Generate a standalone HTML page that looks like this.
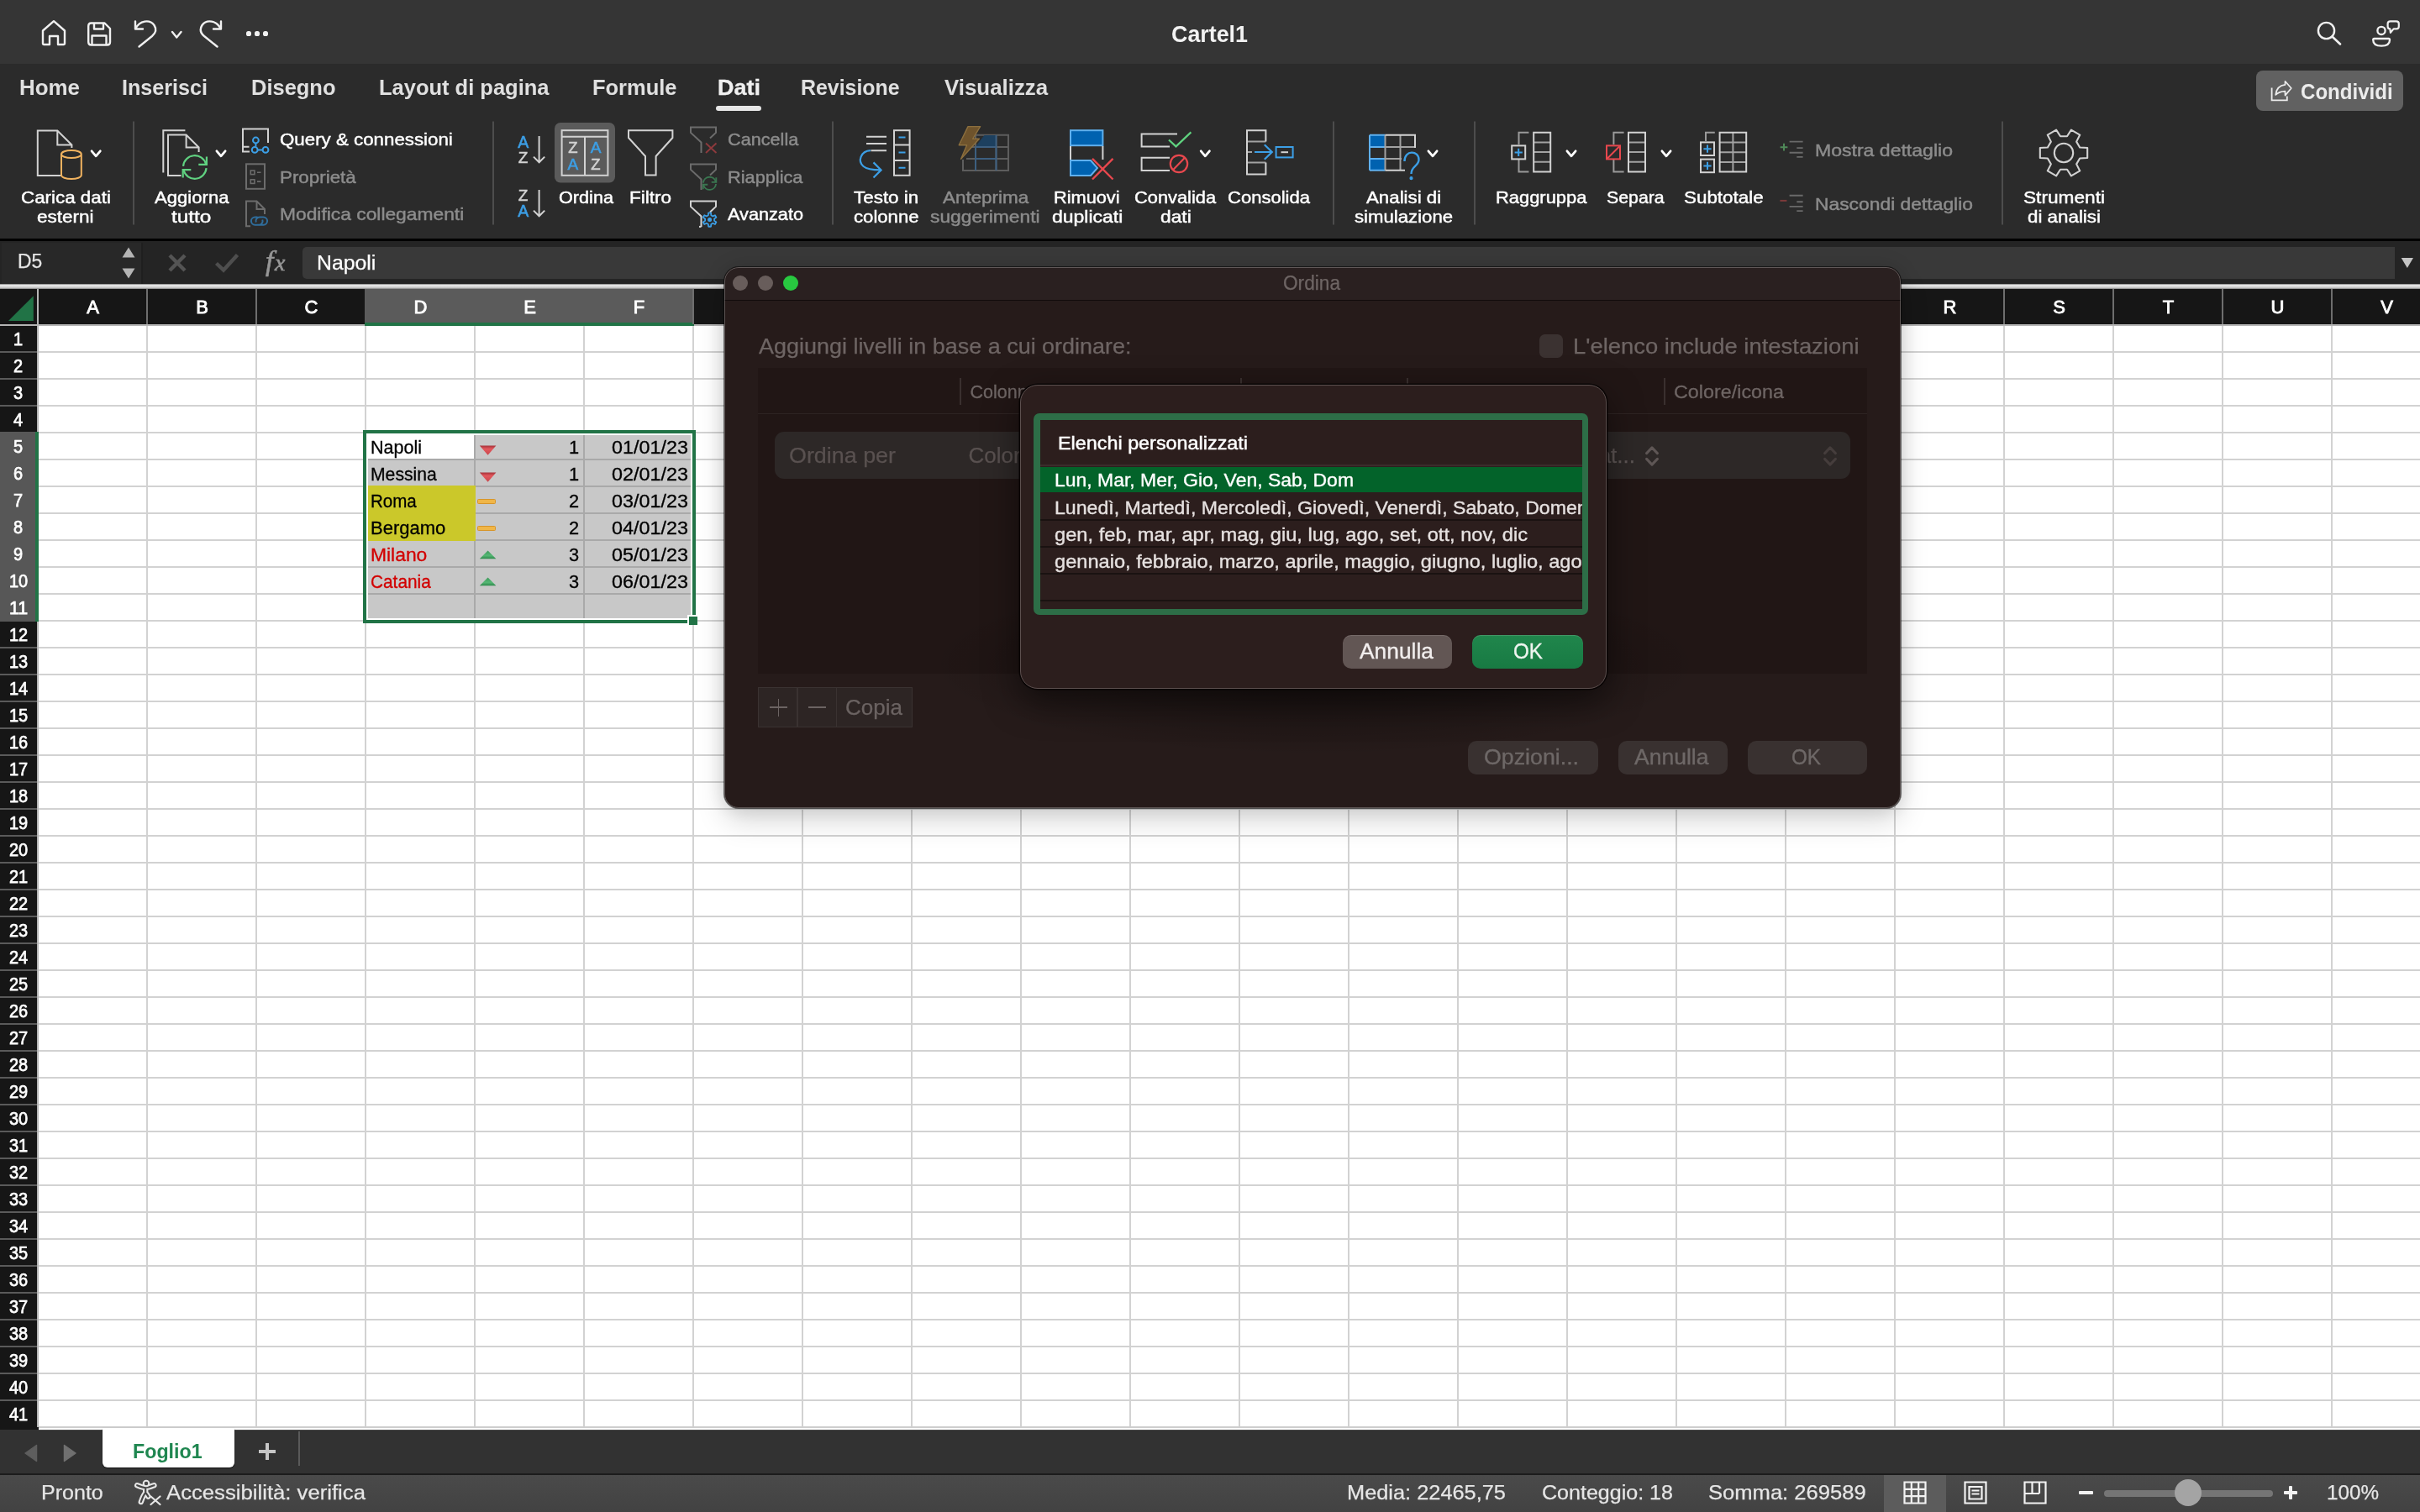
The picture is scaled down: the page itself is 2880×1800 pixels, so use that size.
<!DOCTYPE html><html lang="it"><head><meta charset="utf-8"><title>Cartel1</title><style>
*{margin:0;padding:0;box-sizing:border-box}
html,body{width:2880px;height:1800px;overflow:hidden;background:#fff}
body{position:relative;font-family:"Liberation Sans",sans-serif}
div,span,svg{position:absolute}
#root{left:0;top:0;width:2880px;height:1800px;overflow:hidden;will-change:transform}
.t{white-space:nowrap;transform-origin:0 50%;display:block}
svg{overflow:visible}
</style></head><body><div id="root">
<div style="left:0px;top:0px;width:2880px;height:76px;background:#353535;"></div>
<span class="t" style="left:1394.00px;top:27.64px;font-size:27px;line-height:27px;color:#f2f2f2;font-weight:700;transform:scaleX(0.9940);">Cartel1</span>
<div style="left:0px;top:76px;width:2880px;height:208px;background:#2b2b2b;"></div>
<div style="left:0px;top:283.8px;width:2880px;height:2.8px;background:#000;"></div>
<svg style="left:48px;top:22px" width="32" height="34"><path d="M3 14.5 L16 3.2 L29 14.5 V29.5 Q29 31 27.5 31 H21 V21 H11 V31 H4.5 Q3 31 3 29.5 Z" fill="none" stroke="#f0f0f0" stroke-width="2.4" stroke-linejoin="round"/></svg>
<svg style="left:103px;top:25px" width="31" height="31"><path d="M5.5 2.5 H21.5 L28 9 V25 Q28 28.5 24.5 28.5 H5.5 Q2.2 28.5 2.2 25 V6 Q2.2 2.5 5.5 2.5 Z M9 2.5 V9.5 H20 V2.5 M6.5 28 V17.5 H23.5 V28" fill="none" stroke="#f0f0f0" stroke-width="2.4" stroke-linejoin="round"/></svg>
<svg style="left:158px;top:22px" width="30" height="36"><path d="M3 3.5 V12.5 H12 M3.5 12 C8 2.5 20 0.5 25.5 8 C29 13.5 26.5 18 23 21 L7.5 33.5" fill="none" stroke="#f0f0f0" stroke-width="2.4" stroke-linecap="round" stroke-linejoin="round"/></svg>
<svg style="left:202.75px;top:35.55px" width="14.5" height="10.5"><path d="M2 2 L7.25 8.5 L12.5 2" fill="none" stroke="#f0f0f0" stroke-width="2.4" stroke-linecap="round" stroke-linejoin="round"/></svg>
<svg style="left:236px;top:22px" width="30" height="36"><path d="M27 3.5 V12.5 H18 M26.5 12 C22 2.5 10 0.5 4.5 8 C1 13.5 3.5 18 7 21 L22.5 33.5" fill="none" stroke="#f0f0f0" stroke-width="2.4" stroke-linecap="round" stroke-linejoin="round"/></svg>
<div style="left:293.4px;top:37.4px;width:5.2px;height:5.2px;background:#f0f0f0;border-radius:50%"></div>
<div style="left:303.4px;top:37.4px;width:5.2px;height:5.2px;background:#f0f0f0;border-radius:50%"></div>
<div style="left:313.4px;top:37.4px;width:5.2px;height:5.2px;background:#f0f0f0;border-radius:50%"></div>
<svg style="left:2756.4px;top:24.2px" width="32" height="32"><circle cx="12.5" cy="12.5" r="9.6" fill="none" stroke="#f0f0f0" stroke-width="2.4"/><path d="M19.5 19.5 L29 28.5" fill="none" stroke="#f0f0f0" stroke-width="2.6" stroke-linecap="round"/></svg>
<svg style="left:2822px;top:23px" width="36" height="36"><circle cx="12" cy="13.4" r="4.6" fill="none" stroke="#f0f0f0" stroke-width="2.3"/><path d="M3.5 23 H20.7 Q22 23 22 24.4 C22 29.2 18 31.6 12.1 31.6 C6.2 31.6 2.2 29.2 2.2 24.4 Q2.2 23 3.5 23 Z" fill="none" stroke="#f0f0f0" stroke-width="2.3" stroke-linejoin="round"/><path d="M22.6 2.3 H29.8 Q32.8 2.3 32.8 5.3 V8.4 Q32.8 11.4 29.8 11.4 H26.6 L22.9 15.8 L22.3 11.4 Q19.6 11.2 19.6 8.4 V5.3 Q19.6 2.3 22.6 2.3 Z" fill="none" stroke="#f0f0f0" stroke-width="2.2" stroke-linejoin="round"/></svg>
<span class="t" style="left:23.00px;top:91.76px;font-size:25.8px;line-height:25.8px;color:#e0e0e0;font-weight:700;transform:scaleX(1.0044);">Home</span>
<span class="t" style="left:144.60px;top:91.76px;font-size:25.8px;line-height:25.8px;color:#e0e0e0;font-weight:700;transform:scaleX(0.9742);">Inserisci</span>
<span class="t" style="left:298.50px;top:91.76px;font-size:25.8px;line-height:25.8px;color:#e0e0e0;font-weight:700;transform:scaleX(0.9874);">Disegno</span>
<span class="t" style="left:450.50px;top:91.76px;font-size:25.8px;line-height:25.8px;color:#e0e0e0;font-weight:700;transform:scaleX(0.9879);">Layout di pagina</span>
<span class="t" style="left:704.50px;top:91.76px;font-size:25.8px;line-height:25.8px;color:#e0e0e0;font-weight:700;transform:scaleX(0.9875);">Formule</span>
<span class="t" style="left:953.00px;top:91.76px;font-size:25.8px;line-height:25.8px;color:#e0e0e0;font-weight:700;transform:scaleX(0.9648);">Revisione</span>
<span class="t" style="left:1123.50px;top:91.76px;font-size:25.8px;line-height:25.8px;color:#e0e0e0;font-weight:700;transform:scaleX(1.0028);">Visualizza</span>
<span class="t" style="left:853.50px;top:91.76px;font-size:25.8px;line-height:25.8px;color:#f0f0f0;font-weight:700;transform:scaleX(1.0463);-webkit-text-stroke:0.3px #f0f0f0;">Dati</span>
<div style="left:852px;top:125.8px;width:54px;height:6px;background:#e6e6e6;border-radius:3px"></div>
<div style="left:2685px;top:84px;width:175px;height:48px;background:#616161;border-radius:8px"></div>
<span class="t" style="left:2737.50px;top:96.87px;font-size:25.2px;line-height:25.2px;color:#ececec;font-weight:700;transform:scaleX(0.9556);">Condividi</span>
<svg style="left:2700px;top:95px" width="30" height="28"><path d="M3.6 9.5 V24.4 H21.8 V19.5" fill="none" stroke="#ececec" stroke-width="1.8" /><path d="M19.5 1.8 L26.8 10 L19.5 18.6 V13.6 C14.5 13.8 11 15 8.2 17.9 C9 11 12.5 6.6 19.5 5.9 Z" fill="none" stroke="#ececec" stroke-width="1.7" stroke-linejoin="round"/></svg>
<svg style="left:0;top:0" width="2880" height="290" font-family="Liberation Sans,sans-serif"><rect x="158" y="144.5" width="2" height="123" fill="#4d4d4d" stroke="none" stroke-width="0" /><rect x="586" y="144.5" width="2" height="123" fill="#4d4d4d" stroke="none" stroke-width="0" /><rect x="990" y="144.5" width="2" height="123" fill="#4d4d4d" stroke="none" stroke-width="0" /><rect x="1586" y="144.5" width="2" height="123" fill="#4d4d4d" stroke="none" stroke-width="0" /><rect x="1754" y="144.5" width="2" height="123" fill="#4d4d4d" stroke="none" stroke-width="0" /><rect x="2382" y="144.5" width="2" height="123" fill="#4d4d4d" stroke="none" stroke-width="0" /><path d="M72 208.9 H44.8 V155.5 H68.3 L85.4 172.5 V176 M68.3 155.5 V172.5 H85.4" fill="none" stroke="#d2d2d2" stroke-width="2" stroke-linejoin="miter"/><path d="M73 183.5 V208.5 A11.9 4.6 0 0 0 96.8 208.5 V183.5 A11.9 4.6 0 0 0 73 183.5 A11.9 4.6 0 0 0 96.8 183.5" fill="none" stroke="#f0b25f" stroke-width="2" /><path d="M109.10000000000001 179.8 L114.2 185.8 L119.3 179.8" fill="none" stroke="#fff" stroke-width="2.8" stroke-linecap="round" stroke-linejoin="round"/><path d="M220.4 155.2 H194.3 V205.5" fill="none" stroke="#d2d2d2" stroke-width="2" /><path d="M215.5 208.9 H200 V160.6 H221.6 L236.6 175.5 V181 M221.6 160.6 V175.5 H236.6" fill="none" stroke="#d2d2d2" stroke-width="2" /><path d="M218.05 197.80 A13.8 13.8 0 0 1 245.13 195.43" fill="none" stroke="#60d281" stroke-width="2.2" /><path d="M236.29 195.93 H245.91 V186.59" fill="none" stroke="#60d281" stroke-width="2.2" /><path d="M245.55 200.20 A13.8 13.8 0 0 1 218.47 202.57" fill="none" stroke="#60d281" stroke-width="2.2" /><path d="M227.31 202.07 H217.69 V211.41" fill="none" stroke="#60d281" stroke-width="2.2" /><path d="M257.9 179.8 L263 185.8 L268.1 179.8" fill="none" stroke="#fff" stroke-width="2.8" stroke-linecap="round" stroke-linejoin="round"/><path d="M296.5 174.8 H289 V153.4 H319 V170 M289 174.8 V180.6 H297" fill="none" stroke="#d2d2d2" stroke-width="2" /><path d="M304.4 171 V174.6 M307 178.4 H312" fill="none" stroke="#3c9fe6" stroke-width="2" /><circle cx="304.4" cy="167" r="3.4" fill="none" stroke="#3c9fe6" stroke-width="2"/><circle cx="303.2" cy="178.4" r="3.4" fill="none" stroke="#3c9fe6" stroke-width="2"/><circle cx="316" cy="178.4" r="3.4" fill="none" stroke="#3c9fe6" stroke-width="2"/><rect x="293" y="195.3" width="22" height="29.5" fill="none" stroke="#6c6c6c" stroke-width="2" /><rect x="298.3" y="203" width="4.6" height="4.6" fill="none" stroke="#6c6c6c" stroke-width="1.6" /><rect x="298.3" y="213.8" width="4.6" height="4.6" fill="none" stroke="#6c6c6c" stroke-width="1.6" /><path d="M306 205.3 H310.5 M306 216.1 H310.5" fill="none" stroke="#6c6c6c" stroke-width="1.6" /><path d="M298 269.2 H293 V239.6 H305.5 L315 249 V255 M305.5 239.6 V249 H315" fill="none" stroke="#6c6c6c" stroke-width="2" /><path d="M306.5 258.5 H303.5 A4.6 4.6 0 0 0 303.5 267.7 H308 A4.6 4.6 0 0 0 312.3 261.5 M309.5 267.7 H313.5 A4.6 4.6 0 0 0 313.5 258.5 H309 A4.6 4.6 0 0 0 304.7 264.7" fill="none" stroke="#2f6d9c" stroke-width="2" /><text x="622.8" y="176" font-size="19.5" fill="#3c9fe6" stroke="#3c9fe6" stroke-width="0.55" text-anchor="middle">A</text><text x="622.6" y="194" font-size="19" fill="#d2d2d2" stroke="#d2d2d2" stroke-width="0.55" text-anchor="middle">Z</text><path d="M641.6 162 V193 M635 186.6 L641.6 193.3 L648.2 186.6" fill="none" stroke="#d2d2d2" stroke-width="2" /><text x="622.6" y="239.2" font-size="19" fill="#d2d2d2" stroke="#d2d2d2" stroke-width="0.55" text-anchor="middle">Z</text><text x="622.8" y="257.6" font-size="19.5" fill="#3c9fe6" stroke="#3c9fe6" stroke-width="0.55" text-anchor="middle">A</text><path d="M641.6 226 V257 M635 250.6 L641.6 257.3 L648.2 250.6" fill="none" stroke="#d2d2d2" stroke-width="2" /><rect x="660" y="146" width="72" height="71.6" rx="7" fill="#5b5b5b"/><rect x="668.6" y="155.2" width="54.8" height="53.6" fill="none" stroke="#d2d2d2" stroke-width="2" /><path d="M668.6 162.8 H723.4 M696 162.8 V208.8" fill="none" stroke="#d2d2d2" stroke-width="2" /><text x="681.8" y="182.2" font-size="18.5" fill="#d2d2d2" stroke="#d2d2d2" stroke-width="0.55" text-anchor="middle">Z</text><text x="709" y="182.2" font-size="19" fill="#3c9fe6" stroke="#3c9fe6" stroke-width="0.55" text-anchor="middle">A</text><text x="681.8" y="202.4" font-size="19" fill="#3c9fe6" stroke="#3c9fe6" stroke-width="0.55" text-anchor="middle">A</text><text x="709" y="202.4" font-size="18.5" fill="#d2d2d2" stroke="#d2d2d2" stroke-width="0.55" text-anchor="middle">Z</text><path d="M748 155.3 H800.4 V164 L780.6 186 V208.6 H768 V186 L748 164 Z" fill="none" stroke="#d2d2d2" stroke-width="2" /><path d="M834.5 181.9 V169.4 L822 157.9 V151.4 H852 V157.9 L845 164.4" fill="none" stroke="#6c6c6c" stroke-width="2" /><path d="M840 170.5 L852.5 182 M852.5 170.5 L840 182" fill="none" stroke="#8e3a3d" stroke-width="1.9" /><path d="M834.5 225.9 V213.4 L822 201.9 V195.4 H852 V201.9 L845 208.4" fill="none" stroke="#6c6c6c" stroke-width="2" /><path d="M836.93 217.64 A7.6 7.6 0 0 1 851.84 216.33" fill="none" stroke="#3a7650" stroke-width="1.9" /><path d="M846.74 216.83 H852.29 V211.23" fill="none" stroke="#3a7650" stroke-width="1.9" /><path d="M852.07 218.96 A7.6 7.6 0 0 1 837.16 220.27" fill="none" stroke="#3a7650" stroke-width="1.9" /><path d="M842.26 219.77 H836.71 V225.37" fill="none" stroke="#3a7650" stroke-width="1.9" /><path d="M834.5 269.9 V257.4 L822 245.9 V239.4 H852 V245.9 L845 252.4" fill="none" stroke="#d2d2d2" stroke-width="2" /><path d="M834.5 269.9 H832" fill="none" stroke="#d2d2d2" stroke-width="2" /><path d="M842.87 256.27 L843.13 253.43 L846.07 253.43 L846.33 256.27 L848.35 257.44 L850.94 256.24 L852.41 258.79 L850.08 260.44 L850.08 262.76 L852.41 264.41 L850.94 266.96 L848.35 265.76 L846.33 266.93 L846.07 269.77 L843.13 269.77 L842.87 266.93 L840.85 265.76 L838.26 266.96 L836.79 264.41 L839.12 262.76 L839.12 260.44 L836.79 258.79 L838.26 256.24 L840.85 257.44 Z" fill="none" stroke="#3c9fe6" stroke-width="1.8" stroke-linejoin="round"/><circle cx="844.6" cy="261.6" r="1.6" fill="none" stroke="#3c9fe6" stroke-width="1.8"/><circle cx="844.6" cy="261.6" r="1.6" fill="#3c9fe6" stroke="#3c9fe6" stroke-width="1"/><path d="M1031 162.8 H1055 M1031 171 H1055 M1036.5 179.2 H1055" fill="none" stroke="#d2d2d2" stroke-width="2" /><path d="M1036 179.2 C1024 180 1020.5 192 1027.5 198 C1032 202 1040 202.4 1048 202.4 M1039.5 193.4 L1048.6 202.4 L1039.5 211.5" fill="none" stroke="#3c9fe6" stroke-width="2.2" /><rect x="1064" y="155.2" width="18.6" height="53.6" fill="none" stroke="#d2d2d2" stroke-width="2" /><path d="M1064 172.6 H1082.6 M1064 191 H1082.6" fill="none" stroke="#d2d2d2" stroke-width="2" /><path d="M1069.5 163.4 H1077.5 M1069.5 181.6 H1077.5 M1069.5 199.8 H1077.5" fill="none" stroke="#3c9fe6" stroke-width="2" /><path d="M1161 160.8 H1200 V203 H1146 V190 M1161 160.8 V203 M1185.5 160.8 V203 M1156 175 H1200 M1150 189 H1200" fill="none" stroke="#5d5d5d" stroke-width="2" /><path d="M1161.5 174.5 L1171.5 161.5 H1185 V174.5 Z" fill="#1d405f" stroke="#1d405f" stroke-width="1" /><path d="M1161 175 V203 M1185.5 160.8 V203 M1161 175 H1185.5 M1161 189 H1185.5" fill="none" stroke="#3d5f80" stroke-width="2" /><path d="M1152 150.6 H1166.6 L1157.6 165.3 H1165.4 L1143.6 189.3 L1150.6 172.8 H1141.2 Z" fill="#6e532c" stroke="#8c6f3e" stroke-width="1.4" stroke-linejoin="round"/><rect x="1274" y="155.2" width="38.4" height="18" fill="#0062b0" stroke="#5fb0ee" stroke-width="2" /><path d="M1274 174 V191 M1312.4 174 V190" fill="none" stroke="#d2d2d2" stroke-width="2" /><path d="M1274 191 H1298 L1306 200 L1298 209 H1274 Z" fill="#0062b0" stroke="#5fb0ee" stroke-width="2" /><path d="M1300 188.8 L1324.5 213.5 M1324.5 188.8 L1300 213.5" fill="none" stroke="#e8484e" stroke-width="2.4" /><path d="M1392 174.6 H1358.6 V159.4 H1401" fill="none" stroke="#d2d2d2" stroke-width="2" /><path d="M1392 203 H1358.6 V187.8 H1392" fill="none" stroke="#d2d2d2" stroke-width="2" /><path d="M1391 166.5 L1399.5 174.4 L1417.4 157.4" fill="none" stroke="#5fd27f" stroke-width="2.2" /><circle cx="1403" cy="195" r="10.2" fill="none" stroke="#e8484e" stroke-width="2.2"/><path d="M1396 202.2 L1410 187.8" fill="none" stroke="#e8484e" stroke-width="2.2" /><path d="M1429.2 179.8 L1434.3 185.8 L1439.3999999999999 179.8" fill="none" stroke="#fff" stroke-width="2.8" stroke-linecap="round" stroke-linejoin="round"/><path d="M1484 168.6 H1506.4 M1484 193.4 H1506.4 M1484 181 H1490" fill="none" stroke="#a2a2a2" stroke-width="2" /><path d="M1506.4 168.6 V155.2 H1484 V207.4 H1506.4 V193.4" fill="none" stroke="#d2d2d2" stroke-width="2" /><path d="M1493 181 H1513.6 M1504.8 172.2 L1513.8 181 L1504.8 189.8" fill="none" stroke="#3c9fe6" stroke-width="2.2" /><rect x="1518.6" y="175" width="20" height="12.4" fill="none" stroke="#3c9fe6" stroke-width="2" /><path d="M1524.5 181.2 H1533" fill="none" stroke="#d2d2d2" stroke-width="2" /><rect x="1630" y="161" width="18.5" height="14" fill="#0062b0" stroke="none" stroke-width="0" /><rect x="1630" y="189" width="18.5" height="14" fill="#0062b0" stroke="none" stroke-width="0" /><path d="M1630 160.8 H1648.5 M1630 175 H1648.5 M1630 189 H1648.5 M1630 202.8 H1648.5 M1630 160.8 V202.8" fill="none" stroke="#5fb0ee" stroke-width="2" /><path d="M1648.5 160.8 V202.8 M1666.5 160.8 V202.8 M1648.5 175 H1684 M1648.5 189 H1668" fill="none" stroke="#a2a2a2" stroke-width="2" /><path d="M1648.5 160.8 H1684 V176 M1648.5 202.8 H1672" fill="none" stroke="#d2d2d2" stroke-width="2" /><path d="M1671.5 192 C1671.5 178 1688.5 179 1688.5 190 C1688.5 198 1679.5 197.5 1679.5 207" fill="none" stroke="#3c9fe6" stroke-width="2.4" /><circle cx="1679.5" cy="212.2" r="1.4" fill="#3c9fe6" stroke="#3c9fe6" stroke-width="1.4"/><path d="M1699.9 179.8 L1705 185.8 L1710.1 179.8" fill="none" stroke="#fff" stroke-width="2.8" stroke-linecap="round" stroke-linejoin="round"/><path d="M1819.4 157.8 H1807.5 V172 M1807.5 190 V204.4 H1819.4" fill="none" stroke="#9a9a9a" stroke-width="2" /><rect x="1799.2" y="173.4" width="16" height="16" fill="none" stroke="#d2d2d2" stroke-width="2" /><path d="M1802.6 181.4 H1811.8 M1807.2 176.8 V186" fill="none" stroke="#3c9fe6" stroke-width="2" /><path d=" M1825.2 169.4 H1845.2 M1825.2 181 H1845.2 M1825.2 192.8 H1845.2" fill="none" stroke="#a2a2a2" stroke-width="2" /><path d="M1825.2 157.8 H1845.2 V204.4 H1825.2 Z" fill="none" stroke="#d2d2d2" stroke-width="2" /><path d="M1864.9 179.8 L1870 185.8 L1875.1 179.8" fill="none" stroke="#fff" stroke-width="2.8" stroke-linecap="round" stroke-linejoin="round"/><path d="M1932.6 157.8 H1920.4 V172 M1920.4 190 V204.4 H1932.6" fill="none" stroke="#9a9a9a" stroke-width="2" /><rect x="1912" y="173.4" width="16" height="16" fill="none" stroke="#e8484e" stroke-width="2" /><path d="M1912.5 189 L1927.5 174" fill="none" stroke="#e8484e" stroke-width="2" /><path d=" M1938 169.4 H1958 M1938 181 H1958 M1938 192.8 H1958" fill="none" stroke="#a2a2a2" stroke-width="2" /><path d="M1938 157.8 H1958 V204.4 H1938 Z" fill="none" stroke="#d2d2d2" stroke-width="2" /><path d="M1977.9 179.8 L1983 185.8 L1988.1 179.8" fill="none" stroke="#fff" stroke-width="2.8" stroke-linecap="round" stroke-linejoin="round"/><path d="M2040.8 157.8 H2030 V168" fill="none" stroke="#9a9a9a" stroke-width="2" /><rect x="2024" y="169.4" width="16" height="15.6" fill="none" stroke="#d2d2d2" stroke-width="2" /><path d="M2027.4 177.2 H2036.6 M2032 172.6 V181.8" fill="none" stroke="#3c9fe6" stroke-width="2" /><rect x="2024" y="189.6" width="16" height="15.6" fill="none" stroke="#d2d2d2" stroke-width="2" /><path d="M2027.4 197.4 H2036.6 M2032 192.8 V202" fill="none" stroke="#3c9fe6" stroke-width="2" /><path d="M2062.4 157.8 V204.6" fill="none" stroke="#a2a2a2" stroke-width="2" /><path d=" M2046.6 169.5 H2078.2 M2046.6 181.2 H2078.2 M2046.6 192.9 H2078.2" fill="none" stroke="#a2a2a2" stroke-width="2" /><path d="M2046.6 157.8 H2078.2 V204.6 H2046.6 Z" fill="none" stroke="#d2d2d2" stroke-width="2" /><path d="M2118.6 175.2 H2127.4 M2123 170.8 V179.6" fill="none" stroke="#4f8858" stroke-width="2" /><path d="M2129.6 168.6 H2145.6 M2138.3 176.1 H2145.6 M2129.6 181.7 H2145.6 M2138.3 186.9 H2145.6" fill="none" stroke="#6a6a6a" stroke-width="1.9" /><path d="M2118.4 238.89999999999998 H2126.4" fill="none" stroke="#7c3a3a" stroke-width="2" /><path d="M2129.6 232.8 H2145.6 M2138.3 240.3 H2145.6 M2129.6 245.89999999999998 H2145.6 M2138.3 251.10000000000002 H2145.6" fill="none" stroke="#6a6a6a" stroke-width="1.9" /><path d="M2459.99 162.20 L2464.90 154.61 L2475.27 160.60 L2471.15 168.64 L2475.14 175.56 L2484.17 176.01 L2484.17 187.99 L2475.14 188.44 L2471.15 195.36 L2475.27 203.40 L2464.90 209.39 L2459.99 201.80 L2452.01 201.80 L2447.10 209.39 L2436.73 203.40 L2440.85 195.36 L2436.86 188.44 L2427.83 187.99 L2427.83 176.01 L2436.86 175.56 L2440.85 168.64 L2436.73 160.60 L2447.10 154.61 L2452.01 162.20 Z" fill="none" stroke="#d2d2d2" stroke-width="2.1" stroke-linejoin="round"/><circle cx="2456" cy="182" r="11.2" fill="none" stroke="#d2d2d2" stroke-width="2.1"/></svg>
<span class="t" style="left:24.80px;top:224.86px;font-size:20.6px;line-height:20.6px;color:#fff;transform:scaleX(1.0856);-webkit-text-stroke:0.45px #fff;">Carica dati</span>
<span class="t" style="left:44.00px;top:248.46px;font-size:20.6px;line-height:20.6px;color:#fff;transform:scaleX(1.0933);-webkit-text-stroke:0.45px #fff;">esterni</span>
<span class="t" style="left:183.50px;top:224.86px;font-size:20.6px;line-height:20.6px;color:#fff;transform:scaleX(1.0732);-webkit-text-stroke:0.45px #fff;">Aggiorna</span>
<span class="t" style="left:203.80px;top:248.46px;font-size:20.6px;line-height:20.6px;color:#fff;transform:scaleX(1.1825);-webkit-text-stroke:0.45px #fff;">tutto</span>
<span class="t" style="left:332.70px;top:156.46px;font-size:20.6px;line-height:20.6px;color:#fff;transform:scaleX(1.0832);-webkit-text-stroke:0.45px #fff;">Query &amp; connessioni</span>
<span class="t" style="left:332.70px;top:200.66px;font-size:20.6px;line-height:20.6px;color:#8c8c8c;transform:scaleX(1.0862);-webkit-text-stroke:0.45px #8c8c8c;">Proprietà</span>
<span class="t" style="left:332.70px;top:244.56px;font-size:20.6px;line-height:20.6px;color:#8c8c8c;transform:scaleX(1.1071);-webkit-text-stroke:0.45px #8c8c8c;">Modifica collegamenti</span>
<span class="t" style="left:665.00px;top:224.86px;font-size:20.6px;line-height:20.6px;color:#fff;transform:scaleX(1.0512);-webkit-text-stroke:0.45px #fff;">Ordina</span>
<span class="t" style="left:749.40px;top:224.86px;font-size:20.6px;line-height:20.6px;color:#fff;transform:scaleX(1.0944);-webkit-text-stroke:0.45px #fff;">Filtro</span>
<span class="t" style="left:865.70px;top:156.46px;font-size:20.6px;line-height:20.6px;color:#8c8c8c;transform:scaleX(1.0516);-webkit-text-stroke:0.45px #8c8c8c;">Cancella</span>
<span class="t" style="left:865.70px;top:200.66px;font-size:20.6px;line-height:20.6px;color:#8c8c8c;transform:scaleX(1.0562);-webkit-text-stroke:0.45px #8c8c8c;">Riapplica</span>
<span class="t" style="left:865.70px;top:244.56px;font-size:20.6px;line-height:20.6px;color:#fff;transform:scaleX(1.0524);-webkit-text-stroke:0.45px #fff;">Avanzato</span>
<span class="t" style="left:1016.00px;top:224.86px;font-size:20.6px;line-height:20.6px;color:#fff;transform:scaleX(1.0888);-webkit-text-stroke:0.45px #fff;">Testo in</span>
<span class="t" style="left:1016.00px;top:248.46px;font-size:20.6px;line-height:20.6px;color:#fff;transform:scaleX(1.0753);-webkit-text-stroke:0.45px #fff;">colonne</span>
<span class="t" style="left:1121.70px;top:224.86px;font-size:20.6px;line-height:20.6px;color:#8c8c8c;transform:scaleX(1.0885);-webkit-text-stroke:0.45px #8c8c8c;">Anteprima</span>
<span class="t" style="left:1107.40px;top:248.46px;font-size:20.6px;line-height:20.6px;color:#8c8c8c;transform:scaleX(1.1073);-webkit-text-stroke:0.45px #8c8c8c;">suggerimenti</span>
<span class="t" style="left:1254.40px;top:224.86px;font-size:20.6px;line-height:20.6px;color:#fff;transform:scaleX(1.0564);-webkit-text-stroke:0.45px #fff;">Rimuovi</span>
<span class="t" style="left:1251.70px;top:248.46px;font-size:20.6px;line-height:20.6px;color:#fff;transform:scaleX(1.1153);-webkit-text-stroke:0.45px #fff;">duplicati</span>
<span class="t" style="left:1350.40px;top:224.86px;font-size:20.6px;line-height:20.6px;color:#fff;transform:scaleX(1.0598);-webkit-text-stroke:0.45px #fff;">Convalida</span>
<span class="t" style="left:1380.60px;top:248.46px;font-size:20.6px;line-height:20.6px;color:#fff;transform:scaleX(1.1049);-webkit-text-stroke:0.45px #fff;">dati</span>
<span class="t" style="left:1461.40px;top:224.86px;font-size:20.6px;line-height:20.6px;color:#fff;transform:scaleX(1.0697);-webkit-text-stroke:0.45px #fff;">Consolida</span>
<span class="t" style="left:1625.50px;top:224.86px;font-size:20.6px;line-height:20.6px;color:#fff;transform:scaleX(1.0820);-webkit-text-stroke:0.45px #fff;">Analisi di</span>
<span class="t" style="left:1611.80px;top:248.46px;font-size:20.6px;line-height:20.6px;color:#fff;transform:scaleX(1.0765);-webkit-text-stroke:0.45px #fff;">simulazione</span>
<span class="t" style="left:1780.40px;top:224.86px;font-size:20.6px;line-height:20.6px;color:#fff;transform:scaleX(1.0634);-webkit-text-stroke:0.45px #fff;">Raggruppa</span>
<span class="t" style="left:1911.80px;top:224.86px;font-size:20.6px;line-height:20.6px;color:#fff;transform:scaleX(1.0342);-webkit-text-stroke:0.45px #fff;">Separa</span>
<span class="t" style="left:2003.60px;top:224.86px;font-size:20.6px;line-height:20.6px;color:#fff;transform:scaleX(1.0879);-webkit-text-stroke:0.45px #fff;">Subtotale</span>
<span class="t" style="left:2160.00px;top:168.56px;font-size:20.6px;line-height:20.6px;color:#8c8c8c;transform:scaleX(1.1189);-webkit-text-stroke:0.45px #8c8c8c;">Mostra dettaglio</span>
<span class="t" style="left:2160.00px;top:232.56px;font-size:20.6px;line-height:20.6px;color:#8c8c8c;transform:scaleX(1.1092);-webkit-text-stroke:0.45px #8c8c8c;">Nascondi dettaglio</span>
<span class="t" style="left:2408.00px;top:224.86px;font-size:20.6px;line-height:20.6px;color:#fff;transform:scaleX(1.1003);-webkit-text-stroke:0.45px #fff;">Strumenti</span>
<span class="t" style="left:2413.00px;top:248.46px;font-size:20.6px;line-height:20.6px;color:#fff;transform:scaleX(1.0853);-webkit-text-stroke:0.45px #fff;">di analisi</span>
<div style="left:0px;top:286.5px;width:2880px;height:52px;background:#242424;"></div>
<div style="left:2px;top:288.5px;width:166px;height:49.5px;background:#282828;"></div>
<div style="left:168px;top:288.5px;width:1.5px;height:49.5px;background:#1f1f1f;"></div>
<div style="left:360px;top:294px;width:2490px;height:38px;background:#393939;border-radius:5px 0 0 5px"></div>
<span class="t" style="left:20.80px;top:299.45px;font-size:23.8px;line-height:23.8px;color:#e4e4e4;transform:scaleX(0.9597);-webkit-text-stroke:0.25px #e4e4e4;">D5</span>
<svg style="left:144px;top:293px" width="18" height="40"><path d="M9 1.5 L16.5 13.5 H1.5 Z M9 38.5 L16.5 26.5 H1.5 Z" fill="#b4b4b4"/></svg>
<svg style="left:199px;top:301px" width="24" height="24"><path d="M3 3 L21 21 M21 3 L3 21" fill="none" stroke="#545454" stroke-width="4.4" /></svg>
<svg style="left:254px;top:300px" width="32" height="25"><path d="M3.5 13.5 L12 21.5 L28.5 3.5" fill="none" stroke="#4e4e4e" stroke-width="4.4" /></svg>
<span class="t" style="left:316.00px;top:294.03px;font-size:34px;line-height:34px;color:#979797;font-family:'Liberation Serif',serif;font-style:italic;-webkit-text-stroke:0.6px #979797;">f<span style="position:static;font-size:28px;margin-left:1.5px">x</span></span>
<span class="t" style="left:377.00px;top:301.18px;font-size:24.6px;line-height:24.6px;color:#fff;transform:scaleX(1.0094);-webkit-text-stroke:0.25px #fff;">Napoli</span>
<svg style="left:2856px;top:305px" width="18" height="16"><path d="M1.7 2 H16 L8.85 14 Z" fill="#c4c4c4"/></svg>
<div style="left:0px;top:338.2px;width:2880px;height:5.8px;background:linear-gradient(#7a7a7a 0,#f0f0f0 28%,#d6d6d6 55%,#bcbcbc 85%,#6a6a6a 100%);"></div>
<div style="left:0px;top:344px;width:2880px;height:43px;background:#161616;"></div>
<div style="left:46px;top:386px;width:2834px;height:1314px;background-color:#fff;background-image:linear-gradient(90deg,#d2d2d2 0,#d2d2d2 2px,transparent 2px),linear-gradient(#d2d2d2 0,#d2d2d2 2px,transparent 2px);background-size:130px 32px;background-position:-2px 0"></div>
<div style="left:0px;top:387px;width:44px;height:1313px;background:#161616;"></div>
<div style="left:44px;top:344px;width:2px;height:1356px;background:#b6b6b6;"></div>
<div style="left:434px;top:344px;width:392px;height:40px;background:#5b5b5b;"></div>
<div style="left:434px;top:383.5px;width:392px;height:4px;background:#217346;"></div>
<div style="left:0px;top:514px;width:46px;height:226px;background:#575757;"></div>
<div style="left:42px;top:514px;width:4px;height:226px;background:#217346;"></div>
<div style="left:0px;top:386px;width:434px;height:2px;background:#b4b4b4;"></div>
<div style="left:826px;top:386px;width:2054px;height:2px;background:#b4b4b4;"></div>
<svg style="left:0;top:344px" width="46" height="43"><path d="M10 38 L39.8 8.2 L39.8 38 Z" fill="#217346"/></svg>
<span class="t" style="left:103.16px;top:355.38px;font-size:22px;line-height:22px;color:#fff;-webkit-text-stroke:0.85px #fff;">A</span>
<div style="left:174.0px;top:344px;width:2px;height:42px;background:#6e6e6e;"></div>
<span class="t" style="left:233.16px;top:355.38px;font-size:22px;line-height:22px;color:#fff;-webkit-text-stroke:0.85px #fff;">B</span>
<div style="left:304.0px;top:344px;width:2px;height:42px;background:#6e6e6e;"></div>
<span class="t" style="left:362.56px;top:355.38px;font-size:22px;line-height:22px;color:#fff;-webkit-text-stroke:0.85px #fff;">C</span>
<span class="t" style="left:492.56px;top:355.38px;font-size:22px;line-height:22px;color:#fff;-webkit-text-stroke:0.85px #fff;">D</span>
<span class="t" style="left:623.16px;top:355.38px;font-size:22px;line-height:22px;color:#fff;-webkit-text-stroke:0.85px #fff;">E</span>
<span class="t" style="left:753.78px;top:355.38px;font-size:22px;line-height:22px;color:#fff;-webkit-text-stroke:0.85px #fff;">F</span>
<div style="left:824.0px;top:344px;width:2px;height:42px;background:#6e6e6e;"></div>
<span class="t" style="left:881.94px;top:355.38px;font-size:22px;line-height:22px;color:#fff;-webkit-text-stroke:0.85px #fff;">G</span>
<div style="left:954.0px;top:344px;width:2px;height:42px;background:#6e6e6e;"></div>
<span class="t" style="left:1012.56px;top:355.38px;font-size:22px;line-height:22px;color:#fff;-webkit-text-stroke:0.85px #fff;">H</span>
<div style="left:1084.0px;top:344px;width:2px;height:42px;background:#6e6e6e;"></div>
<span class="t" style="left:1147.44px;top:355.38px;font-size:22px;line-height:22px;color:#fff;-webkit-text-stroke:0.85px #fff;">I</span>
<div style="left:1214.0px;top:344px;width:2px;height:42px;background:#6e6e6e;"></div>
<span class="t" style="left:1275.00px;top:355.38px;font-size:22px;line-height:22px;color:#fff;-webkit-text-stroke:0.85px #fff;">J</span>
<div style="left:1344.0px;top:344px;width:2px;height:42px;background:#6e6e6e;"></div>
<span class="t" style="left:1403.16px;top:355.38px;font-size:22px;line-height:22px;color:#fff;-webkit-text-stroke:0.85px #fff;">K</span>
<div style="left:1474.0px;top:344px;width:2px;height:42px;background:#6e6e6e;"></div>
<span class="t" style="left:1534.38px;top:355.38px;font-size:22px;line-height:22px;color:#fff;-webkit-text-stroke:0.85px #fff;">L</span>
<div style="left:1604.0px;top:344px;width:2px;height:42px;background:#6e6e6e;"></div>
<span class="t" style="left:1661.34px;top:355.38px;font-size:22px;line-height:22px;color:#fff;-webkit-text-stroke:0.85px #fff;">M</span>
<div style="left:1734.0px;top:344px;width:2px;height:42px;background:#6e6e6e;"></div>
<span class="t" style="left:1792.56px;top:355.38px;font-size:22px;line-height:22px;color:#fff;-webkit-text-stroke:0.85px #fff;">N</span>
<div style="left:1864.0px;top:344px;width:2px;height:42px;background:#6e6e6e;"></div>
<span class="t" style="left:1921.94px;top:355.38px;font-size:22px;line-height:22px;color:#fff;-webkit-text-stroke:0.85px #fff;">O</span>
<div style="left:1994.0px;top:344px;width:2px;height:42px;background:#6e6e6e;"></div>
<span class="t" style="left:2053.16px;top:355.38px;font-size:22px;line-height:22px;color:#fff;-webkit-text-stroke:0.85px #fff;">P</span>
<div style="left:2124.0px;top:344px;width:2px;height:42px;background:#6e6e6e;"></div>
<span class="t" style="left:2181.94px;top:355.38px;font-size:22px;line-height:22px;color:#fff;-webkit-text-stroke:0.85px #fff;">Q</span>
<div style="left:2254.0px;top:344px;width:2px;height:42px;background:#6e6e6e;"></div>
<span class="t" style="left:2312.56px;top:355.38px;font-size:22px;line-height:22px;color:#fff;-webkit-text-stroke:0.85px #fff;">R</span>
<div style="left:2384.0px;top:344px;width:2px;height:42px;background:#6e6e6e;"></div>
<span class="t" style="left:2443.16px;top:355.38px;font-size:22px;line-height:22px;color:#fff;-webkit-text-stroke:0.85px #fff;">S</span>
<div style="left:2514.0px;top:344px;width:2px;height:42px;background:#6e6e6e;"></div>
<span class="t" style="left:2573.78px;top:355.38px;font-size:22px;line-height:22px;color:#fff;-webkit-text-stroke:0.85px #fff;">T</span>
<div style="left:2644.0px;top:344px;width:2px;height:42px;background:#6e6e6e;"></div>
<span class="t" style="left:2702.56px;top:355.38px;font-size:22px;line-height:22px;color:#fff;-webkit-text-stroke:0.85px #fff;">U</span>
<div style="left:2774.0px;top:344px;width:2px;height:42px;background:#6e6e6e;"></div>
<span class="t" style="left:2833.16px;top:355.38px;font-size:22px;line-height:22px;color:#fff;-webkit-text-stroke:0.85px #fff;">V</span>
<div style="left:2904.0px;top:344px;width:2px;height:42px;background:#6e6e6e;"></div>
<span class="t" style="left:16.45px;top:393.38px;font-size:22px;line-height:22px;color:#fff;transform:scaleX(0.9072);-webkit-text-stroke:0.75px #fff;">1</span>
<div style="left:0px;top:418px;width:44px;height:2px;background:#5a5a5a;"></div>
<span class="t" style="left:16.45px;top:425.38px;font-size:22px;line-height:22px;color:#fff;transform:scaleX(0.9072);-webkit-text-stroke:0.75px #fff;">2</span>
<div style="left:0px;top:450px;width:44px;height:2px;background:#5a5a5a;"></div>
<span class="t" style="left:16.45px;top:457.38px;font-size:22px;line-height:22px;color:#fff;transform:scaleX(0.9072);-webkit-text-stroke:0.75px #fff;">3</span>
<div style="left:0px;top:482px;width:44px;height:2px;background:#5a5a5a;"></div>
<span class="t" style="left:16.45px;top:489.38px;font-size:22px;line-height:22px;color:#fff;transform:scaleX(0.9072);-webkit-text-stroke:0.75px #fff;">4</span>
<span class="t" style="left:16.45px;top:521.38px;font-size:22px;line-height:22px;color:#fff;transform:scaleX(0.9072);-webkit-text-stroke:0.75px #fff;">5</span>
<span class="t" style="left:16.45px;top:553.38px;font-size:22px;line-height:22px;color:#fff;transform:scaleX(0.9072);-webkit-text-stroke:0.75px #fff;">6</span>
<span class="t" style="left:16.45px;top:585.38px;font-size:22px;line-height:22px;color:#fff;transform:scaleX(0.9072);-webkit-text-stroke:0.75px #fff;">7</span>
<span class="t" style="left:16.45px;top:617.38px;font-size:22px;line-height:22px;color:#fff;transform:scaleX(0.9072);-webkit-text-stroke:0.75px #fff;">8</span>
<span class="t" style="left:16.45px;top:649.38px;font-size:22px;line-height:22px;color:#fff;transform:scaleX(0.9072);-webkit-text-stroke:0.75px #fff;">9</span>
<span class="t" style="left:10.90px;top:681.38px;font-size:22px;line-height:22px;color:#fff;transform:scaleX(0.9072);-webkit-text-stroke:0.75px #fff;">10</span>
<span class="t" style="left:10.90px;top:713.38px;font-size:22px;line-height:22px;color:#fff;transform:scaleX(0.9720);-webkit-text-stroke:0.75px #fff;">11</span>
<span class="t" style="left:10.90px;top:745.38px;font-size:22px;line-height:22px;color:#fff;transform:scaleX(0.9072);-webkit-text-stroke:0.75px #fff;">12</span>
<div style="left:0px;top:770px;width:44px;height:2px;background:#5a5a5a;"></div>
<span class="t" style="left:10.90px;top:777.38px;font-size:22px;line-height:22px;color:#fff;transform:scaleX(0.9072);-webkit-text-stroke:0.75px #fff;">13</span>
<div style="left:0px;top:802px;width:44px;height:2px;background:#5a5a5a;"></div>
<span class="t" style="left:10.90px;top:809.38px;font-size:22px;line-height:22px;color:#fff;transform:scaleX(0.9072);-webkit-text-stroke:0.75px #fff;">14</span>
<div style="left:0px;top:834px;width:44px;height:2px;background:#5a5a5a;"></div>
<span class="t" style="left:10.90px;top:841.38px;font-size:22px;line-height:22px;color:#fff;transform:scaleX(0.9072);-webkit-text-stroke:0.75px #fff;">15</span>
<div style="left:0px;top:866px;width:44px;height:2px;background:#5a5a5a;"></div>
<span class="t" style="left:10.90px;top:873.38px;font-size:22px;line-height:22px;color:#fff;transform:scaleX(0.9072);-webkit-text-stroke:0.75px #fff;">16</span>
<div style="left:0px;top:898px;width:44px;height:2px;background:#5a5a5a;"></div>
<span class="t" style="left:10.90px;top:905.38px;font-size:22px;line-height:22px;color:#fff;transform:scaleX(0.9072);-webkit-text-stroke:0.75px #fff;">17</span>
<div style="left:0px;top:930px;width:44px;height:2px;background:#5a5a5a;"></div>
<span class="t" style="left:10.90px;top:937.38px;font-size:22px;line-height:22px;color:#fff;transform:scaleX(0.9072);-webkit-text-stroke:0.75px #fff;">18</span>
<div style="left:0px;top:962px;width:44px;height:2px;background:#5a5a5a;"></div>
<span class="t" style="left:10.90px;top:969.38px;font-size:22px;line-height:22px;color:#fff;transform:scaleX(0.9072);-webkit-text-stroke:0.75px #fff;">19</span>
<div style="left:0px;top:994px;width:44px;height:2px;background:#5a5a5a;"></div>
<span class="t" style="left:10.90px;top:1001.38px;font-size:22px;line-height:22px;color:#fff;transform:scaleX(0.9072);-webkit-text-stroke:0.75px #fff;">20</span>
<div style="left:0px;top:1026px;width:44px;height:2px;background:#5a5a5a;"></div>
<span class="t" style="left:10.90px;top:1033.38px;font-size:22px;line-height:22px;color:#fff;transform:scaleX(0.9072);-webkit-text-stroke:0.75px #fff;">21</span>
<div style="left:0px;top:1058px;width:44px;height:2px;background:#5a5a5a;"></div>
<span class="t" style="left:10.90px;top:1065.38px;font-size:22px;line-height:22px;color:#fff;transform:scaleX(0.9072);-webkit-text-stroke:0.75px #fff;">22</span>
<div style="left:0px;top:1090px;width:44px;height:2px;background:#5a5a5a;"></div>
<span class="t" style="left:10.90px;top:1097.38px;font-size:22px;line-height:22px;color:#fff;transform:scaleX(0.9072);-webkit-text-stroke:0.75px #fff;">23</span>
<div style="left:0px;top:1122px;width:44px;height:2px;background:#5a5a5a;"></div>
<span class="t" style="left:10.90px;top:1129.38px;font-size:22px;line-height:22px;color:#fff;transform:scaleX(0.9072);-webkit-text-stroke:0.75px #fff;">24</span>
<div style="left:0px;top:1154px;width:44px;height:2px;background:#5a5a5a;"></div>
<span class="t" style="left:10.90px;top:1161.38px;font-size:22px;line-height:22px;color:#fff;transform:scaleX(0.9072);-webkit-text-stroke:0.75px #fff;">25</span>
<div style="left:0px;top:1186px;width:44px;height:2px;background:#5a5a5a;"></div>
<span class="t" style="left:10.90px;top:1193.38px;font-size:22px;line-height:22px;color:#fff;transform:scaleX(0.9072);-webkit-text-stroke:0.75px #fff;">26</span>
<div style="left:0px;top:1218px;width:44px;height:2px;background:#5a5a5a;"></div>
<span class="t" style="left:10.90px;top:1225.38px;font-size:22px;line-height:22px;color:#fff;transform:scaleX(0.9072);-webkit-text-stroke:0.75px #fff;">27</span>
<div style="left:0px;top:1250px;width:44px;height:2px;background:#5a5a5a;"></div>
<span class="t" style="left:10.90px;top:1257.38px;font-size:22px;line-height:22px;color:#fff;transform:scaleX(0.9072);-webkit-text-stroke:0.75px #fff;">28</span>
<div style="left:0px;top:1282px;width:44px;height:2px;background:#5a5a5a;"></div>
<span class="t" style="left:10.90px;top:1289.38px;font-size:22px;line-height:22px;color:#fff;transform:scaleX(0.9072);-webkit-text-stroke:0.75px #fff;">29</span>
<div style="left:0px;top:1314px;width:44px;height:2px;background:#5a5a5a;"></div>
<span class="t" style="left:10.90px;top:1321.38px;font-size:22px;line-height:22px;color:#fff;transform:scaleX(0.9072);-webkit-text-stroke:0.75px #fff;">30</span>
<div style="left:0px;top:1346px;width:44px;height:2px;background:#5a5a5a;"></div>
<span class="t" style="left:10.90px;top:1353.38px;font-size:22px;line-height:22px;color:#fff;transform:scaleX(0.9072);-webkit-text-stroke:0.75px #fff;">31</span>
<div style="left:0px;top:1378px;width:44px;height:2px;background:#5a5a5a;"></div>
<span class="t" style="left:10.90px;top:1385.38px;font-size:22px;line-height:22px;color:#fff;transform:scaleX(0.9072);-webkit-text-stroke:0.75px #fff;">32</span>
<div style="left:0px;top:1410px;width:44px;height:2px;background:#5a5a5a;"></div>
<span class="t" style="left:10.90px;top:1417.38px;font-size:22px;line-height:22px;color:#fff;transform:scaleX(0.9072);-webkit-text-stroke:0.75px #fff;">33</span>
<div style="left:0px;top:1442px;width:44px;height:2px;background:#5a5a5a;"></div>
<span class="t" style="left:10.90px;top:1449.38px;font-size:22px;line-height:22px;color:#fff;transform:scaleX(0.9072);-webkit-text-stroke:0.75px #fff;">34</span>
<div style="left:0px;top:1474px;width:44px;height:2px;background:#5a5a5a;"></div>
<span class="t" style="left:10.90px;top:1481.38px;font-size:22px;line-height:22px;color:#fff;transform:scaleX(0.9072);-webkit-text-stroke:0.75px #fff;">35</span>
<div style="left:0px;top:1506px;width:44px;height:2px;background:#5a5a5a;"></div>
<span class="t" style="left:10.90px;top:1513.38px;font-size:22px;line-height:22px;color:#fff;transform:scaleX(0.9072);-webkit-text-stroke:0.75px #fff;">36</span>
<div style="left:0px;top:1538px;width:44px;height:2px;background:#5a5a5a;"></div>
<span class="t" style="left:10.90px;top:1545.38px;font-size:22px;line-height:22px;color:#fff;transform:scaleX(0.9072);-webkit-text-stroke:0.75px #fff;">37</span>
<div style="left:0px;top:1570px;width:44px;height:2px;background:#5a5a5a;"></div>
<span class="t" style="left:10.90px;top:1577.38px;font-size:22px;line-height:22px;color:#fff;transform:scaleX(0.9072);-webkit-text-stroke:0.75px #fff;">38</span>
<div style="left:0px;top:1602px;width:44px;height:2px;background:#5a5a5a;"></div>
<span class="t" style="left:10.90px;top:1609.38px;font-size:22px;line-height:22px;color:#fff;transform:scaleX(0.9072);-webkit-text-stroke:0.75px #fff;">39</span>
<div style="left:0px;top:1634px;width:44px;height:2px;background:#5a5a5a;"></div>
<span class="t" style="left:10.90px;top:1641.38px;font-size:22px;line-height:22px;color:#fff;transform:scaleX(0.9072);-webkit-text-stroke:0.75px #fff;">40</span>
<div style="left:0px;top:1666px;width:44px;height:2px;background:#5a5a5a;"></div>
<span class="t" style="left:10.90px;top:1673.38px;font-size:22px;line-height:22px;color:#fff;transform:scaleX(0.9072);-webkit-text-stroke:0.75px #fff;">41</span>
<div style="left:438px;top:518px;width:384px;height:218px;background:#c8c8c8;"></div>
<div style="left:564px;top:518px;width:2px;height:218px;background:#a9a9a9;"></div>
<div style="left:694px;top:518px;width:2px;height:218px;background:#a9a9a9;"></div>
<div style="left:438px;top:546px;width:384px;height:2px;background:#a9a9a9;"></div>
<div style="left:438px;top:578px;width:384px;height:2px;background:#a9a9a9;"></div>
<div style="left:438px;top:610px;width:384px;height:2px;background:#a9a9a9;"></div>
<div style="left:438px;top:642px;width:384px;height:2px;background:#a9a9a9;"></div>
<div style="left:438px;top:674px;width:384px;height:2px;background:#a9a9a9;"></div>
<div style="left:438px;top:706px;width:384px;height:2px;background:#a9a9a9;"></div>
<div style="left:438px;top:518px;width:126px;height:28px;background:#fff;"></div>
<div style="left:438px;top:578px;width:128px;height:66px;background:#cbc82a;"></div>
<div style="left:432px;top:512px;width:396px;height:230px;border:4px solid #217346"></div>
<div style="left:436px;top:516px;width:388px;height:222px;border:2px solid #fff"></div>
<div style="left:818px;top:732px;width:12px;height:12px;background:#fff;"></div>
<div style="left:820px;top:734px;width:10px;height:10px;background:#217346;"></div>
<span class="t" style="left:441.40px;top:521.55px;font-size:21.8px;line-height:21.8px;color:#000;transform:scaleX(0.9870);-webkit-text-stroke:0.3px #000;">Napoli</span>
<span class="t" style="left:676.88px;top:521.55px;font-size:21.8px;line-height:21.8px;color:#000;-webkit-text-stroke:0.3px #000;">1</span>
<span class="t" style="left:728.00px;top:521.55px;font-size:21.8px;line-height:21.8px;color:#000;transform:scaleX(1.0724);-webkit-text-stroke:0.3px #000;">01/01/23</span>
<svg style="left:569.5px;top:530px" width="21" height="13"><defs><linearGradient id="rg0" x1="0" y1="0" x2="0" y2="1"><stop offset="0" stop-color="#a8333a"/><stop offset=".35" stop-color="#e2585d"/><stop offset="1" stop-color="#c8454a"/></linearGradient></defs><path d="M0.8 0.6 L20.4 0.6 L10.6 11.8 Z" fill="url(#rg0)"/></svg>
<span class="t" style="left:441.40px;top:553.55px;font-size:21.8px;line-height:21.8px;color:#000;transform:scaleX(0.9707);-webkit-text-stroke:0.3px #000;">Messina</span>
<span class="t" style="left:676.88px;top:553.55px;font-size:21.8px;line-height:21.8px;color:#000;-webkit-text-stroke:0.3px #000;">1</span>
<span class="t" style="left:728.00px;top:553.55px;font-size:21.8px;line-height:21.8px;color:#000;transform:scaleX(1.0724);-webkit-text-stroke:0.3px #000;">02/01/23</span>
<svg style="left:569.5px;top:562px" width="21" height="13"><defs><linearGradient id="rg1" x1="0" y1="0" x2="0" y2="1"><stop offset="0" stop-color="#a8333a"/><stop offset=".35" stop-color="#e2585d"/><stop offset="1" stop-color="#c8454a"/></linearGradient></defs><path d="M0.8 0.6 L20.4 0.6 L10.6 11.8 Z" fill="url(#rg1)"/></svg>
<span class="t" style="left:441.40px;top:585.55px;font-size:21.8px;line-height:21.8px;color:#000;transform:scaleX(0.9423);-webkit-text-stroke:0.3px #000;">Roma</span>
<span class="t" style="left:676.88px;top:585.55px;font-size:21.8px;line-height:21.8px;color:#000;-webkit-text-stroke:0.3px #000;">2</span>
<span class="t" style="left:728.00px;top:585.55px;font-size:21.8px;line-height:21.8px;color:#000;transform:scaleX(1.0724);-webkit-text-stroke:0.3px #000;">03/01/23</span>
<div style="left:568px;top:594px;width:22px;height:6px;background:#f0b648;border-radius:1.5px;border:1px solid #d7952a"></div>
<span class="t" style="left:441.40px;top:617.55px;font-size:21.8px;line-height:21.8px;color:#000;transform:scaleX(1.0095);-webkit-text-stroke:0.3px #000;">Bergamo</span>
<span class="t" style="left:676.88px;top:617.55px;font-size:21.8px;line-height:21.8px;color:#000;-webkit-text-stroke:0.3px #000;">2</span>
<span class="t" style="left:728.00px;top:617.55px;font-size:21.8px;line-height:21.8px;color:#000;transform:scaleX(1.0724);-webkit-text-stroke:0.3px #000;">04/01/23</span>
<div style="left:568px;top:626px;width:22px;height:6px;background:#f0b648;border-radius:1.5px;border:1px solid #d7952a"></div>
<span class="t" style="left:441.40px;top:649.55px;font-size:21.8px;line-height:21.8px;color:#d20000;transform:scaleX(1.0479);-webkit-text-stroke:0.3px #d20000;">Milano</span>
<span class="t" style="left:676.88px;top:649.55px;font-size:21.8px;line-height:21.8px;color:#000;-webkit-text-stroke:0.3px #000;">3</span>
<span class="t" style="left:728.00px;top:649.55px;font-size:21.8px;line-height:21.8px;color:#000;transform:scaleX(1.0724);-webkit-text-stroke:0.3px #000;">05/01/23</span>
<svg style="left:569.5px;top:654.5px" width="21" height="12"><defs><linearGradient id="gg4" x1="0" y1="0" x2="0" y2="1"><stop offset="0" stop-color="#3f9a5c"/><stop offset=".6" stop-color="#55b774"/><stop offset="1" stop-color="#2f8a4c"/></linearGradient></defs><path d="M0.8 10.2 L20.4 10.2 L10.6 0.6 Z" fill="url(#gg4)"/></svg>
<span class="t" style="left:441.40px;top:681.55px;font-size:21.8px;line-height:21.8px;color:#d20000;transform:scaleX(0.9555);-webkit-text-stroke:0.3px #d20000;">Catania</span>
<span class="t" style="left:676.88px;top:681.55px;font-size:21.8px;line-height:21.8px;color:#000;-webkit-text-stroke:0.3px #000;">3</span>
<span class="t" style="left:728.00px;top:681.55px;font-size:21.8px;line-height:21.8px;color:#000;transform:scaleX(1.0724);-webkit-text-stroke:0.3px #000;">06/01/23</span>
<svg style="left:569.5px;top:686.5px" width="21" height="12"><defs><linearGradient id="gg5" x1="0" y1="0" x2="0" y2="1"><stop offset="0" stop-color="#3f9a5c"/><stop offset=".6" stop-color="#55b774"/><stop offset="1" stop-color="#2f8a4c"/></linearGradient></defs><path d="M0.8 10.2 L20.4 10.2 L10.6 0.6 Z" fill="url(#gg5)"/></svg>
<div style="left:0px;top:1701.8px;width:2880px;height:53px;background:#323232;"></div>
<div style="left:0px;top:1699px;width:46px;height:3px;background:#161616;"></div>
<div style="left:46px;top:1701.8px;width:2834px;height:1.2px;background:#4a4a4a;"></div>
<div style="left:46px;top:1698px;width:2834px;height:2px;background:#cecece;"></div>
<div style="left:0px;top:1753.5px;width:2880px;height:2px;background:#1c1c1c;"></div>
<div style="left:0px;top:1755.5px;width:2880px;height:44.5px;background:linear-gradient(#4a4a4a,#424242)"></div>
<svg style="left:27px;top:1717px" width="20" height="25"><path d="M16.5 3.5 V22.5 L3 13 Z" fill="#5e5e5e" stroke="#5e5e5e" stroke-width="1.5" stroke-linejoin="round"/></svg>
<svg style="left:74px;top:1717px" width="20" height="25"><path d="M2.5 3.5 V22.5 L16 13 Z" fill="#707070" stroke="#707070" stroke-width="1.5" stroke-linejoin="round"/></svg>
<div style="left:121.5px;top:1700px;width:157.5px;height:46.8px;background:#fff;border-radius:0 0 6px 6px;box-shadow:0 1px 1.5px rgba(0,0,0,.6)"></div>
<span class="t" style="left:157.70px;top:1715.66px;font-size:24.5px;line-height:24.5px;color:#1f8650;font-weight:700;transform:scaleX(0.9494);">Foglio1</span>
<div style="left:307.5px;top:1726.2px;width:20.5px;height:3.6px;background:#c6c6c6;"></div>
<div style="left:316px;top:1717.8px;width:3.6px;height:20.5px;background:#c6c6c6;"></div>
<div style="left:354.5px;top:1704px;width:2px;height:41px;background:#5a5a5a;"></div>
<span class="t" style="left:48.80px;top:1765.38px;font-size:24.6px;line-height:24.6px;color:#e6e6e6;transform:scaleX(1.0182);-webkit-text-stroke:0.25px #e6e6e6;">Pronto</span>
<svg style="left:160px;top:1760px" width="34" height="34"><path d="M13.2 11 C9.5 11 6.5 9.6 3.2 8.2 M13.2 11 C17 11 20 9.6 23.4 8.2 M13.2 11 V17 M13.2 17 C11 19.5 9.5 23 7.8 28 M13.2 17 C14.6 18.6 15.6 20 16.4 21.6" fill="none" stroke="#e6e6e6" stroke-width="6.4" stroke-linecap="round" stroke-linejoin="round"/><path d="M13.2 11 C9.5 11 6.5 9.6 3.2 8.2 M13.2 11 C17 11 20 9.6 23.4 8.2 M13.2 11 V17 M13.2 17 C11 19.5 9.5 23 7.8 28 M13.2 17 C14.6 18.6 15.6 20 16.4 21.6" fill="none" stroke="#474747" stroke-width="2.2" stroke-linecap="round" stroke-linejoin="round"/><circle cx="14" cy="6" r="3.3" fill="#474747" stroke="#e6e6e6" stroke-width="2.1"/><path d="M19.5 21.5 L30.5 31 M30.5 21.5 L19.5 31" fill="none" stroke="#e6e6e6" stroke-width="2.2" stroke-linecap="round"/></svg>
<span class="t" style="left:198.00px;top:1765.38px;font-size:24.6px;line-height:24.6px;color:#e6e6e6;transform:scaleX(1.0443);-webkit-text-stroke:0.25px #e6e6e6;">Accessibilità: verifica</span>
<span class="t" style="left:1603.00px;top:1765.38px;font-size:24.6px;line-height:24.6px;color:#e6e6e6;transform:scaleX(1.0312);-webkit-text-stroke:0.25px #e6e6e6;">Media: 22465,75</span>
<span class="t" style="left:1834.50px;top:1765.38px;font-size:24.6px;line-height:24.6px;color:#e6e6e6;transform:scaleX(1.0184);-webkit-text-stroke:0.25px #e6e6e6;">Conteggio: 18</span>
<span class="t" style="left:2033.00px;top:1765.38px;font-size:24.6px;line-height:24.6px;color:#e6e6e6;transform:scaleX(1.0398);-webkit-text-stroke:0.25px #e6e6e6;">Somma: 269589</span>
<div style="left:2242px;top:1755.5px;width:74px;height:44.5px;background:#5c5c5c;"></div>
<svg style="left:2265px;top:1763px" width="28" height="28"><path d="M1.5 1.5 H26.5 V26.5 H1.5 Z M1.5 9.8 H26.5 M1.5 18.2 H26.5 M9.8 1.5 V26.5 M18.2 1.5 V26.5" fill="none" stroke="#f2f2f2" stroke-width="2.2"/></svg>
<svg style="left:2336.5px;top:1763px" width="28" height="28"><path d="M1.5 1.5 H26.5 V26.5 H1.5 Z M6.5 7 H21.5 V21.5 H6.5 Z M9.5 11.5 H18.5 M9.5 15.5 H18.5" fill="none" stroke="#f2f2f2" stroke-width="2.2"/></svg>
<svg style="left:2407.5px;top:1763px" width="28" height="28"><path d="M1.5 1.5 H26.5 V26.5 H1.5 Z M1.5 15 H19 M10.5 1.5 V15 M19 1.5 V15" fill="none" stroke="#f2f2f2" stroke-width="2.2"/></svg>
<div style="left:2474px;top:1775px;width:16.5px;height:4.2px;background:#f2f2f2;border-radius:1px"></div>
<div style="left:2503.5px;top:1773.6px;width:201px;height:8.2px;background:#757575;border-radius:4.1px"></div>
<div style="left:2587.8px;top:1761px;width:32px;height:32px;background:#a4a4a4;border-radius:50%"></div>
<div style="left:2717.8px;top:1775px;width:16.2px;height:4.2px;background:#f2f2f2;border-radius:1px"></div>
<div style="left:2723.8px;top:1769px;width:4.2px;height:16.2px;background:#f2f2f2;border-radius:1px"></div>
<span class="t" style="left:2769.00px;top:1765.38px;font-size:24.6px;line-height:24.6px;color:#e6e6e6;transform:scaleX(0.9854);-webkit-text-stroke:0.25px #e6e6e6;">100%</span>
<div style="left:862px;top:318px;width:1400px;height:644px;background:#261b1a;border-radius:17px;box-shadow:0 0 0 1px rgba(0,0,0,.55),0 16px 34px rgba(0,0,0,.15),0 0 24px rgba(0,0,0,.14);overflow:hidden">
<div style="left:0px;top:0px;width:1400px;height:38.5px;background:#2a2020;"></div>
<div style="left:0px;top:38.5px;width:1400px;height:1.5px;background:#120c0c;"></div>
<div style="left:0px;top:0px;width:1400px;height:644px;border-radius:17px;border:1.5px solid rgba(255,255,255,.26)"></div>
<div style="left:10px;top:10px;width:18px;height:18px;background:#685d5b;border-radius:50%"></div>
<div style="left:40px;top:10px;width:18px;height:18px;background:#685d5b;border-radius:50%"></div>
<div style="left:70px;top:10px;width:18px;height:18px;background:#28c840;border-radius:50%"></div>
<span class="t" style="left:664.50px;top:8.03px;font-size:23px;line-height:23px;color:#6e6564;transform:scaleX(0.9850);-webkit-text-stroke:0.25px #6e6564;">Ordina</span>
<span class="t" style="left:41.00px;top:81.91px;font-size:25.5px;line-height:25.5px;color:#6e6564;transform:scaleX(1.0570);-webkit-text-stroke:0.25px #6e6564;">Aggiungi livelli in base a cui ordinare:</span>
<div style="left:970px;top:80px;width:28px;height:28px;background:#3b3231;border-radius:6.5px"></div>
<span class="t" style="left:1010.00px;top:81.91px;font-size:25.5px;line-height:25.5px;color:#6e6564;transform:scaleX(1.0750);-webkit-text-stroke:0.25px #6e6564;">L'elenco include intestazioni</span>
<div style="left:40px;top:119.5px;width:1320px;height:364px;background:#211615;"></div>
<div style="left:40px;top:173.8px;width:1320px;height:1.5px;background:#2e2423;"></div>
<div style="left:280.25px;top:132px;width:1.5px;height:32px;background:#3a302f;"></div>
<div style="left:614.25px;top:132px;width:1.5px;height:32px;background:#3a302f;"></div>
<div style="left:812.25px;top:132px;width:1.5px;height:32px;background:#3a302f;"></div>
<div style="left:1118.25px;top:132px;width:1.5px;height:32px;background:#3a302f;"></div>
<span class="t" style="left:292.50px;top:138.80px;font-size:21.5px;line-height:21.5px;color:#6e6564;-webkit-text-stroke:0.3px #6e6564;">Colonna</span>
<span class="t" style="left:1130.00px;top:138.80px;font-size:21.5px;line-height:21.5px;color:#6e6564;transform:scaleX(1.0852);-webkit-text-stroke:0.3px #6e6564;">Colore/icona</span>
<div style="left:60px;top:196px;width:1279.5px;height:56px;background:#2d2827;border-radius:11px"></div>
<span class="t" style="left:76.80px;top:211.49px;font-size:26px;line-height:26px;color:#595150;transform:scaleX(1.0338);-webkit-text-stroke:0.25px #595150;">Ordina per</span>
<span class="t" style="left:290.50px;top:211.49px;font-size:26px;line-height:26px;color:#595150;-webkit-text-stroke:0.25px #595150;">Colore</span>
<span class="t" style="left:1021.87px;top:211.49px;font-size:26px;line-height:26px;color:#5e5655;-webkit-text-stroke:0.25px #5e5655;">Dat...</span>
<svg style="left:1096px;top:211.5px" width="16" height="26"><path d="M1.6 9.6 L8 2.9 L14.4 9.6 M1.6 16.4 L8 23.1 L14.4 16.4" fill="none" stroke="#5e5655" stroke-width="3" stroke-linecap="round" stroke-linejoin="round"/></svg>
<svg style="left:1308px;top:211.5px" width="16" height="26"><path d="M1.6 9.6 L8 2.9 L14.4 9.6 M1.6 16.4 L8 23.1 L14.4 16.4" fill="none" stroke="#453d3c" stroke-width="3" stroke-linecap="round" stroke-linejoin="round"/></svg>
<div style="left:40px;top:500px;width:184px;height:48px;background:#2d2524;border:1.5px solid #3a3231"></div>
<div style="left:86px;top:500px;width:1.5px;height:48px;background:#3a3231;"></div>
<div style="left:132.5px;top:500px;width:1.5px;height:48px;background:#3a3231;"></div>
<div style="left:54px;top:523px;width:21px;height:1.8px;background:#6b6362;"></div>
<div style="left:63.6px;top:513.5px;width:1.8px;height:21px;background:#6b6362;"></div>
<div style="left:99.5px;top:523px;width:21px;height:1.8px;background:#6b6362;"></div>
<span class="t" style="left:143.70px;top:511.91px;font-size:25.5px;line-height:25.5px;color:#6b6362;transform:scaleX(1.0206);-webkit-text-stroke:0.25px #6b6362;">Copia</span>
<div style="left:884.5px;top:564px;width:155.5px;height:40px;background:#393130;border-radius:10px"></div>
<span class="t" style="left:904.25px;top:571.41px;font-size:25.5px;line-height:25.5px;color:#6e6867;transform:scaleX(1.0491);-webkit-text-stroke:0.35px #6e6867;">Opzioni...</span>
<div style="left:1064px;top:564px;width:130px;height:40px;background:#393130;border-radius:10px"></div>
<span class="t" style="left:1083.25px;top:571.41px;font-size:25.5px;line-height:25.5px;color:#6e6867;transform:scaleX(1.0403);-webkit-text-stroke:0.35px #6e6867;">Annulla</span>
<div style="left:1218px;top:564px;width:142px;height:40px;background:#393130;border-radius:10px"></div>
<span class="t" style="left:1270.00px;top:571.41px;font-size:25.5px;line-height:25.5px;color:#6e6867;transform:scaleX(0.9500);-webkit-text-stroke:0.35px #6e6867;">OK</span>
<div style="left:238px;top:382px;width:930px;height:200px;background:radial-gradient(ellipse at 50% 45%,rgba(0,0,0,.45),rgba(0,0,0,0) 70%)"></div>
<div style="left:352.3px;top:140px;width:697.5px;height:362px;background:#2c1e1d;border-radius:21px;box-shadow:0 0 0 1.5px rgba(8,4,4,.95),0 14px 40px rgba(0,0,0,.5);border:1.5px solid #5c4f4e"></div>
<div style="left:368px;top:174px;width:660px;height:240px;background:#2d6e47;border-radius:7px"></div>
<div style="left:375.5px;top:181.5px;width:645px;height:225.5px;background:#2c1e1d;"></div>
<span class="t" style="left:396.80px;top:200.00px;font-size:21.5px;line-height:21.5px;color:#fff;transform:scaleX(1.0868);-webkit-text-stroke:0.45px #fff;">Elenchi personalizzati</span>
<div style="left:375.5px;top:235px;width:645px;height:2px;background:#3a2c2b;"></div>
<div style="left:375.5px;top:238px;width:645px;height:30px;background:#03632a;"></div>
<div style="left:375.5px;top:238px;width:645px;height:169px;overflow:hidden">
<span class="t" style="left:17.50px;top:5.28px;font-size:22px;line-height:22px;color:#fff;transform:scaleX(1.0435);-webkit-text-stroke:0.35px #fff;">Lun, Mar, Mer, Gio, Ven, Sab, Dom</span>
<span class="t" style="left:17.50px;top:38.08px;font-size:22px;line-height:22px;color:#e6e1e0;transform:scaleX(1.0505);-webkit-text-stroke:0.35px #e6e1e0;">Lunedì, Martedì, Mercoledì, Giovedì, Venerdì, Sabato, Domenica</span>
<span class="t" style="left:17.50px;top:70.08px;font-size:22px;line-height:22px;color:#e6e1e0;transform:scaleX(1.0765);-webkit-text-stroke:0.35px #e6e1e0;">gen, feb, mar, apr, mag, giu, lug, ago, set, ott, nov, dic</span>
<span class="t" style="left:17.50px;top:102.08px;font-size:22px;line-height:22px;color:#e6e1e0;transform:scaleX(1.0735);-webkit-text-stroke:0.35px #e6e1e0;">gennaio, febbraio, marzo, aprile, maggio, giugno, luglio, agosto, settembre</span>
</div>
<div style="left:375.5px;top:300px;width:645px;height:2px;background:#1a1211;"></div>
<div style="left:375.5px;top:332px;width:645px;height:2px;background:#1a1211;"></div>
<div style="left:375.5px;top:364px;width:645px;height:2px;background:#1a1211;"></div>
<div style="left:375.5px;top:396px;width:645px;height:2px;background:#1a1211;"></div>
<div style="left:736px;top:438px;width:130px;height:40px;background:#625654;border-radius:10px;box-shadow:inset 0 1px 0 rgba(255,255,255,.12)"></div>
<span class="t" style="left:756.00px;top:445.41px;font-size:25.5px;line-height:25.5px;color:#f2eeee;transform:scaleX(1.0344);-webkit-text-stroke:0.3px #f2eeee;">Annulla</span>
<div style="left:890px;top:438px;width:132px;height:40px;border-radius:10px;background:linear-gradient(#20864c,#187a43);box-shadow:inset 0 1px 0 rgba(255,255,255,.15)"></div>
<span class="t" style="left:938.50px;top:445.41px;font-size:25.5px;line-height:25.5px;color:#eef4ef;transform:scaleX(0.9500);-webkit-text-stroke:0.3px #eef4ef;">OK</span>
</div>
</div></body></html>
